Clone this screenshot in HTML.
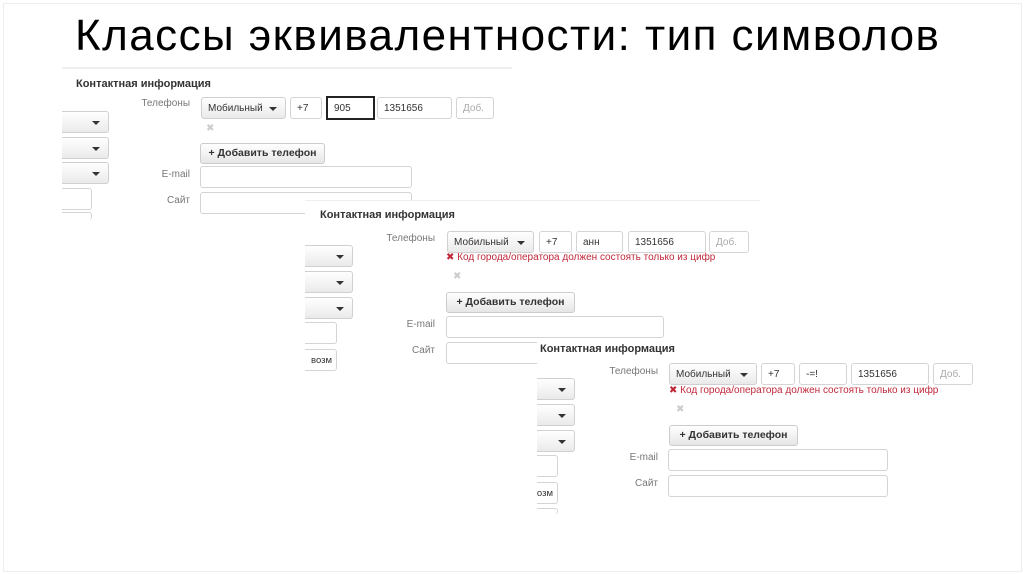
<!DOCTYPE html>
<html><head><meta charset="utf-8"><style>
body{margin:0;width:1024px;height:574px;background:#fff;position:relative;overflow:hidden;font-family:"Liberation Sans",sans-serif}
.frame{position:absolute;left:3px;top:3px;right:2px;bottom:2px;border:1px solid #eee}
.a{position:absolute}
.p{position:absolute;background:#fff}
.h{position:absolute;font-weight:bold;font-size:11px;color:#333}
.l{position:absolute;font-size:10px;color:#777;text-align:right;width:80px}
.i{position:absolute;box-sizing:border-box;border:1px solid #d4d4d4;border-radius:3px;background:#fff;font-size:10px;color:#333;padding-left:6px;line-height:21px}
.s{background:linear-gradient(#fff,#eaeaea);border-color:#d0d0d0}
.s:after{content:"";position:absolute;right:8px;top:9px;border-left:4px solid transparent;border-right:4px solid transparent;border-top:4px solid #333}
.lf{border-left:none;border-radius:0 3px 3px 0}
.b{position:absolute;box-sizing:border-box;border:1px solid #ccc;border-radius:3px;background:linear-gradient(#fff,#e6e6e6);font-size:10.5px;font-weight:bold;color:#333;text-align:center;line-height:19px}
.e{position:absolute;font-size:10px;color:#c0283a}
.x{position:absolute;font-size:10px;color:#ccc}
</style></head><body>
<div class="frame"></div>
<div class="a" style="left:75px;top:11px;font-size:44px;letter-spacing:1.45px;color:#000;white-space:nowrap">Классы эквивалентности: тип символов</div>

<!-- panel 1 -->
<div class="p" style="left:62px;top:67px;width:450px;height:152px;border-top:2px solid #eee"></div>
<div class="h" style="left:76px;top:78px">Контактная информация</div>
<div class="l" style="left:110px;top:98px">Телефоны</div>
<div class="i s" style="left:201px;top:97px;width:85px;height:22px">Мобильный</div>
<div class="i" style="left:290px;top:97px;width:32px;height:22px">+7</div>
<div class="i" style="left:326px;top:96px;width:49px;height:24px;border:2px solid #222;border-radius:0">905</div>
<div class="i" style="left:377px;top:97px;width:75px;height:22px">1351656</div>
<div class="i" style="left:456px;top:97px;width:38px;height:22px;color:#aaa">Доб.</div>
<div class="x" style="left:206px;top:123px">✖</div>
<div class="b" style="left:200px;top:143px;width:125px;height:21px">+ Добавить телефон</div>
<div class="l" style="left:110px;top:169px">E-mail</div>
<div class="i" style="left:200px;top:166px;width:212px;height:22px"></div>
<div class="l" style="left:110px;top:195px">Сайт</div>
<div class="i" style="left:200px;top:192px;width:212px;height:22px"></div>
<div class="i s lf" style="left:62px;top:111px;width:47px;height:22px"></div>
<div class="i s lf" style="left:62px;top:137px;width:47px;height:22px"></div>
<div class="i s lf" style="left:62px;top:162px;width:47px;height:22px"></div>
<div class="i lf" style="left:62px;top:188px;width:30px;height:22px"></div>
<div class="i lf" style="left:62px;top:212px;width:30px;height:8px;border-bottom:none"></div>

<!-- panel 2 -->
<div class="p" style="left:305px;top:200px;width:455px;height:172px;border-top:1px solid #eee"></div>
<div class="h" style="left:320px;top:209px">Контактная информация</div>
<div class="l" style="left:355px;top:233px">Телефоны</div>
<div class="i s" style="left:447px;top:231px;width:87px;height:22px">Мобильный</div>
<div class="i" style="left:539px;top:231px;width:33px;height:22px">+7</div>
<div class="i" style="left:576px;top:231px;width:47px;height:22px">анн</div>
<div class="i" style="left:628px;top:231px;width:78px;height:22px">1351656</div>
<div class="i" style="left:709px;top:231px;width:40px;height:22px;color:#aaa">Доб.</div>
<div class="e" style="left:446px;top:252px">✖ Код города/оператора должен состоять только из цифр</div>
<div class="x" style="left:453px;top:271px">✖</div>
<div class="b" style="left:446px;top:292px;width:129px;height:21px">+ Добавить телефон</div>
<div class="l" style="left:355px;top:319px">E-mail</div>
<div class="i" style="left:446px;top:316px;width:218px;height:22px"></div>
<div class="l" style="left:355px;top:345px">Сайт</div>
<div class="i" style="left:446px;top:342px;width:218px;height:22px"></div>
<div class="i s lf" style="left:305px;top:245px;width:48px;height:22px"></div>
<div class="i s lf" style="left:305px;top:271px;width:48px;height:22px"></div>
<div class="i s lf" style="left:305px;top:297px;width:48px;height:22px"></div>
<div class="i lf" style="left:305px;top:322px;width:32px;height:22px"></div>
<div class="i lf" style="left:305px;top:349px;width:32px;height:22px;text-align:right;padding-right:4px;font-size:9.5px">возм</div>

<!-- panel 3 -->
<div class="p" style="left:537px;top:338px;width:470px;height:180px"></div>
<div class="h" style="left:540px;top:343px">Контактная информация</div>
<div class="l" style="left:578px;top:366px">Телефоны</div>
<div class="i s" style="left:669px;top:363px;width:88px;height:22px">Мобильный</div>
<div class="i" style="left:761px;top:363px;width:34px;height:22px">+7</div>
<div class="i" style="left:799px;top:363px;width:48px;height:22px">-=!</div>
<div class="i" style="left:851px;top:363px;width:78px;height:22px">1351656</div>
<div class="i" style="left:933px;top:363px;width:40px;height:22px;color:#aaa">Доб.</div>
<div class="e" style="left:669px;top:385px">✖ Код города/оператора должен состоять только из цифр</div>
<div class="x" style="left:676px;top:404px">✖</div>
<div class="b" style="left:669px;top:425px;width:129px;height:21px">+ Добавить телефон</div>
<div class="l" style="left:578px;top:452px">E-mail</div>
<div class="i" style="left:668px;top:449px;width:220px;height:22px"></div>
<div class="l" style="left:578px;top:478px">Сайт</div>
<div class="i" style="left:668px;top:475px;width:220px;height:22px"></div>
<div class="i s lf" style="left:537px;top:378px;width:38px;height:22px"></div>
<div class="i s lf" style="left:537px;top:404px;width:38px;height:22px"></div>
<div class="i s lf" style="left:537px;top:430px;width:38px;height:22px"></div>
<div class="i lf" style="left:537px;top:455px;width:21px;height:22px"></div>
<div class="i lf" style="left:537px;top:482px;width:21px;height:22px;text-align:right;padding-right:4px;font-size:9.5px;overflow:hidden;white-space:nowrap;direction:rtl">возм</div>
<div class="i lf" style="left:537px;top:508px;width:21px;height:6px;border-bottom:none"></div>
</body></html>
